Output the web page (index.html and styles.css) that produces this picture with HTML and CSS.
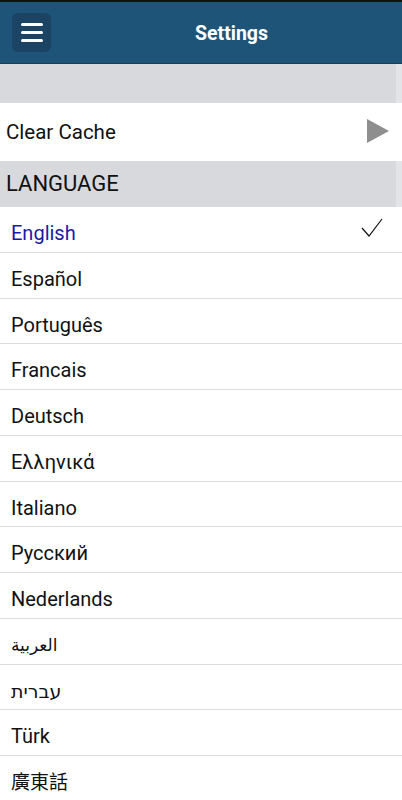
FILE: index.html
```html
<!DOCTYPE html>
<html>
<head>
  <meta charset="utf-8">
  <title>Settings</title>
  <link rel="stylesheet" href="styles.css">
</head>
<body>
  <header class="topbar">
    <button class="menu-btn" aria-label="Menu">
      <span></span><span></span><span></span>
    </button>
    <h1 class="topbar-title">Settings</h1>
  </header>

  <section class="settings">
    <div class="band band-empty"></div>

    <div class="cache-row">
      <span class="cache-label">Clear Cache</span>
      <svg class="play-icon" width="22" height="24" viewBox="0 0 22 24">
        <polygon points="0,0 22,12 0,24" fill="#8e8e8e"/>
      </svg>
    </div>

    <div class="band band-title">LANGUAGE</div>

    <ul class="lang-list">
      <li class="lang-item selected">
        <span class="lang-label">English</span>
        <svg class="check-icon" width="22" height="20" viewBox="0 0 22 20">
          <polyline points="1,10 8,18 21,1" fill="none" stroke="#111" stroke-width="1.2"/>
        </svg>
      </li>
      <li class="lang-item"><span class="lang-label">Español</span></li>
      <li class="lang-item"><span class="lang-label">Português</span></li>
      <li class="lang-item"><span class="lang-label">Francais</span></li>
      <li class="lang-item"><span class="lang-label">Deutsch</span></li>
      <li class="lang-item"><span class="lang-label">Ελληνικά</span></li>
      <li class="lang-item"><span class="lang-label">Italiano</span></li>
      <li class="lang-item"><span class="lang-label">Русский</span></li>
      <li class="lang-item"><span class="lang-label">Nederlands</span></li>
      <li class="lang-item"><span class="lang-label lang-ar">العربية</span></li>
      <li class="lang-item"><span class="lang-label lang-he">עברית</span></li>
      <li class="lang-item"><span class="lang-label">Türk</span></li>
      <li class="lang-item"><span class="lang-label lang-zh">廣東話</span></li>
    </ul>
  </section>
</body>
</html>
```

FILE: styles.css
```css
* {
  margin: 0;
  padding: 0;
  box-sizing: border-box;
}

body {
  font-family: Roboto, "Noto Sans", Arial, sans-serif;
  background: #fff;
  color: #111;
  overflow: hidden;
}

.topbar {
  height: 64px;
  background: #1f5479;
  border-top: 2px solid #111;
  border-bottom: 1px solid #173f5d;
  display: flex;
  align-items: center;
  padding-left: 12px;
}

.menu-btn {
  width: 39px;
  height: 39px;
  border: none;
  border-radius: 6px;
  background: #1b4364;
  display: flex;
  flex-direction: column;
  align-items: center;
  justify-content: center;
  gap: 5px;
  margin-top: -1px;
}

.menu-btn span {
  display: block;
  width: 22px;
  height: 3px;
  border-radius: 2px;
  background: #fff;
}

.topbar-title {
  flex: 1;
  text-align: center;
  color: #fff;
  font-size: 19.5px;
  font-weight: 700;
  padding-left: 10px;
  margin-top: 2px;
}

.band {
  background: #d8d9dd;
  border-right: 6px solid #e3e4e7;
}

.band-empty {
  height: 39px;
}

.band-title {
  height: 46px;
  font-size: 22px;
  padding: 11px 0 0 6px;
  line-height: 24px;
}

.cache-row {
  height: 58px;
  display: flex;
  align-items: center;
  justify-content: space-between;
  padding: 0 13px 0 6px;
}

.cache-label {
  font-size: 20.5px;
}

.play-icon {
  margin-top: -2px;
}

.lang-list {
  list-style: none;
}

.lang-item {
  height: 45.75px;
  border-bottom: 1px solid #dcdcdc;
  display: flex;
  align-items: flex-start;
  justify-content: space-between;
  padding: 15px 19px 0 11px;
}

.lang-label {
  display: block;
  font-size: 20px;
  line-height: 23px;
}

.selected .lang-label {
  color: #1a1aa8;
}

.check-icon {
  margin-top: -4px;
}

.lang-ar {
  font-family: "DejaVu Sans", sans-serif;
  font-size: 17px;
}

.lang-he {
  font-family: "DejaVu Sans", sans-serif;
  font-size: 19px;
}

.lang-zh {
  font-family: Roboto, "Noto Sans CJK TC", sans-serif;
  font-size: 19px;
}
```
